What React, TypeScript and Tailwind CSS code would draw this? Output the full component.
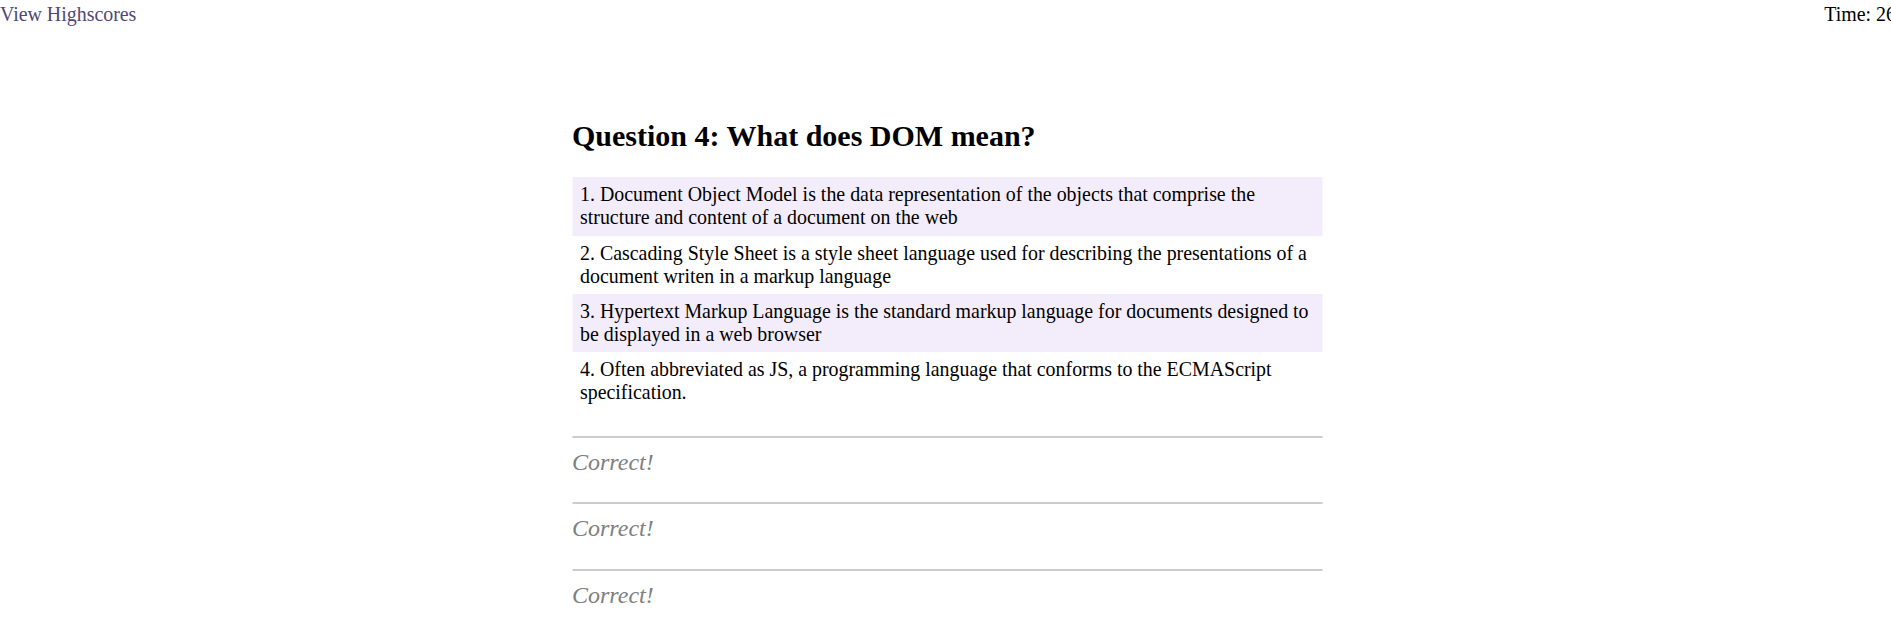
import React from 'react';

// Quiz screen: question with four choices, then the feedback log below.

const CHOICES = [
    '1. Document Object Model is the data representation of the objects that comprise the structure and content of a document on the web',
    '2. Cascading Style Sheet is a style sheet language used for describing the presentations of a document writen in a markup language',
    '3. Hypertext Markup Language is the standard markup language for documents designed to be displayed in a web browser',
    '4. Often abbreviated as JS, a programming language that conforms to the ECMAScript specification.',
];

const FEEDBACK = ['Correct!', 'Correct!', 'Correct!'];

export default function App() {
    return (
        <div className="min-h-[637px] overflow-hidden bg-white text-black" style={{ fontFamily: '"Liberation Serif", "Times New Roman", serif' }}>
            <header className="flex justify-between pt-[3px] text-[19.9px] leading-[1.15]">
                <a href="#" className="text-[#4f4875]">View Highscores</a>
                <span className="-mr-[5px]">Time: 26</span>
            </header>

            <main className="w-[750px] mx-auto pt-[93px] translate-x-[1.5px]">
                <h2 className="text-[30px] font-bold leading-[1.15] mb-[24px]">Question 4: What does DOM mean?</h2>

                <ol>
                    {CHOICES.map((c, i) => (
                        <li
                            key={i}
                            className={`pl-[8px] pr-[4px] py-[6px] text-[19.9px] leading-[1.16] ${i % 2 === 0 ? 'bg-[#f3edfb]' : ''}`}
                        >
                            {c}
                        </li>
                    ))}
                </ol>

                <div className="mt-[26px]">
                    {FEEDBACK.map((f, i) => (
                        <div key={i} className="border-t-2 border-[#cccccc] pt-[11px] pb-[27px]">
                            <p className="italic text-[24px] leading-[1.1] text-[#808080]">{f}</p>
                        </div>
                    ))}
                </div>
            </main>
        </div>
    );
}
